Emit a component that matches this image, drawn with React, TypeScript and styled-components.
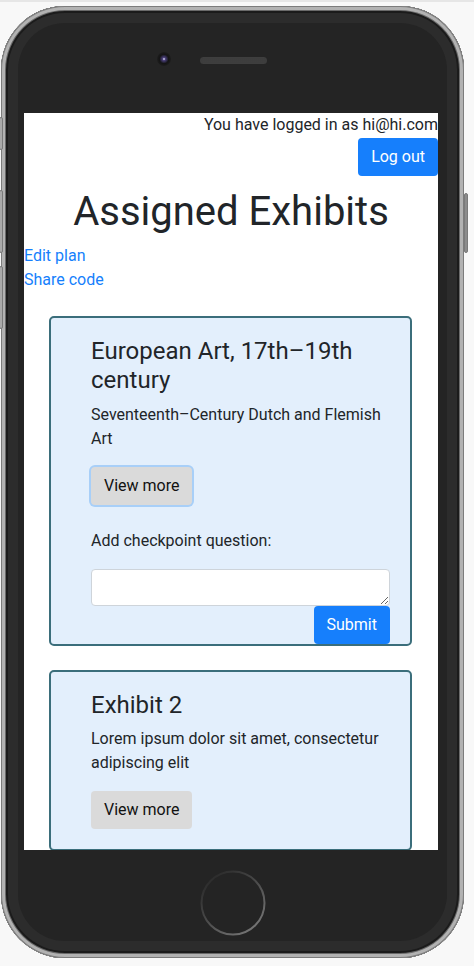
import React from "react";
import styled, { createGlobalStyle } from "styled-components";

const Global = createGlobalStyle`
  html { background: #f8f8f8; }
  body {
    margin: 0;
    border-top: 2px solid #e6e6e6;
    background: #f8f8f8;
    font-family: Roboto, "Liberation Sans", Arial, sans-serif;
  }
  * { box-sizing: border-box; }
`;

const Phone = styled.div`
  position: relative;
  width: 463px;
  height: 952px;
  margin: 4px 0 0 1px;
  border-radius: 64px;
  background: #242424;
  box-shadow:
    inset 0 0 0 1px #7c7c7c,
    inset 0 0 0 4px #b2b2b2,
    inset 0 0 0 5px #6a6a6a,
    inset 0 0 0 7px #1b1b1b,
    inset 0 0 0 17px #2c2c2c;
  display: flex;
  flex-direction: column;
`;

const SideButton = styled.div<{ $top: number; $height: number; $side: "left" | "right" }>`
  position: absolute;
  top: ${(p) => p.$top}px;
  height: ${(p) => p.$height}px;
  width: 4px;
  ${(p) => (p.$side === "left" ? "left: -2px;" : "right: -4px;")}
  background: ${(p) => (p.$side === "left" ? "#a9a9a9" : "#8c8c8c")};
  border-radius: 2px;
  border: 1px solid #7a7a7a;
`;

const TopBezel = styled.div`
  height: 107px;
  display: flex;
  align-items: flex-start;
  gap: 29px;
  padding: 46px 0 0 156px;
`;

const Camera = styled.div`
  width: 14px;
  height: 14px;
  border-radius: 50%;
  background: radial-gradient(
    circle,
    #a29ec6 0 0.8px,
    #4a3f78 1.6px,
    #2c2844 3.2px,
    #141414 4.6px,
    #1d1d1d 7px
  );
`;

const Speaker = styled.div`
  margin-top: 5px;
  width: 67px;
  height: 7px;
  border-radius: 4px;
  background-color: #303030;
  background-image: radial-gradient(#5c5c5c 0.5px, transparent 0.8px);
  background-size: 2px 2px;
  box-shadow: inset 0 0 0 1px #3e3e3e;
`;

const Screen = styled.div`
  margin-left: 23px;
  width: 414px;
  height: 737px;
  background: #ffffff;
  overflow: hidden;
  font-size: 16px;
  line-height: 1.5;
  color: #212529;
`;

const BottomBezel = styled.div`
  display: flex;
  justify-content: center;
  padding-top: 20px;
`;

const UserBar = styled.div`
  text-align: right;
  color: #212529;
`;

const RightRow = styled.div<{ $offset?: number }>`
  display: flex;
  justify-content: flex-end;
  margin-top: ${(p) => p.$offset ?? 0}px;
`;

const Button = styled.button<{ $variant: "primary" | "secondary"; $focused?: boolean }>`
  font-family: inherit;
  font-size: 16px;
  line-height: 24px;
  padding: 7px 13px;
  height: 38px;
  border: none;
  border-radius: 4px;
  cursor: pointer;
  background: ${(p) => (p.$variant === "primary" ? "#167ffc" : "#dadada")};
  color: ${(p) => (p.$variant === "primary" ? "#ffffff" : "#111111")};
  box-shadow: ${(p) => (p.$focused ? "0 0 0 2px #a8cff8" : "none")};
`;

const Title = styled.h1`
  margin: 12px 0 8px;
  font-size: 40px;
  line-height: 48px;
  font-weight: 400;
  text-align: center;
  color: #212529;
`;

const NavLink = styled.a`
  display: block;
  color: #167ffc;
  text-decoration: none;
  line-height: 24px;
`;

const Cards = styled.div`
  padding-top: 24px;
  display: flex;
  flex-direction: column;
  gap: 24px;
`;

const Card = styled.div`
  margin: 0 26px 0 25px;
  border: 2px solid #3b6e7b;
  border-radius: 5px;
  background: #e3effc;
  padding: 19px 20px 0 40px;
`;

const CardTitle = styled.h4`
  margin: 0 0 8px;
  font-size: 24px;
  line-height: 28.8px;
  font-weight: 400;
  color: #212529;
`;

const CardText = styled.p`
  margin: 0 0 16px;
`;

const Label = styled.div`
  margin: 24px 0 16px;
`;

const Question = styled.textarea`
  display: block;
  width: 100%;
  height: 37px;
  border: 1px solid #ced4da;
  border-radius: 4px;
  background: #fff;
  font-family: inherit;
  font-size: 16px;
  resize: vertical;
`;

const Spacer = styled.div`
  height: 20px;
`;

const HomeButton = () => (
  <svg width="66" height="66" viewBox="0 0 66 66">
    <defs>
      <linearGradient id="hb" x1="0.1" y1="0" x2="0.9" y2="1">
        <stop offset="0" stopColor="#262626" />
        <stop offset="0.4" stopColor="#444444" />
        <stop offset="1" stopColor="#7c7c7c" />
      </linearGradient>
    </defs>
    <circle cx="33" cy="33" r="31.5" fill="none" stroke="url(#hb)" strokeWidth="2" />
  </svg>
);

export default function App() {
  return (
    <>
      <Global />
      <Phone>
        <SideButton $side="left" $top={111} $height={33} />
        <SideButton $side="left" $top={184} $height={63} />
        <SideButton $side="left" $top={260} $height={63} />
        <SideButton $side="right" $top={187} $height={60} />
        <TopBezel>
          <Camera />
          <Speaker />
        </TopBezel>
        <Screen>
          <UserBar>You have logged in as hi@hi.com</UserBar>
          <RightRow $offset={1}>
            <Button $variant="primary">Log out</Button>
          </RightRow>
          <Title>Assigned Exhibits</Title>
          <NavLink href="#">Edit plan</NavLink>
          <NavLink href="#">Share code</NavLink>
          <Cards>
            <Card>
              <CardTitle>European Art, 17th–19th century</CardTitle>
              <CardText>Seventeenth–Century Dutch and Flemish Art</CardText>
              <Button $variant="secondary" $focused>
                View more
              </Button>
              <Label>Add checkpoint question:</Label>
              <Question />
              <RightRow>
                <Button $variant="primary">Submit</Button>
              </RightRow>
            </Card>
            <Card>
              <CardTitle>Exhibit 2</CardTitle>
              <CardText>Lorem ipsum dolor sit amet, consectetur adipiscing elit</CardText>
              <Button $variant="secondary">View more</Button>
              <Spacer />
            </Card>
          </Cards>
        </Screen>
        <BottomBezel>
          <HomeButton />
        </BottomBezel>
      </Phone>
    </>
  );
}
